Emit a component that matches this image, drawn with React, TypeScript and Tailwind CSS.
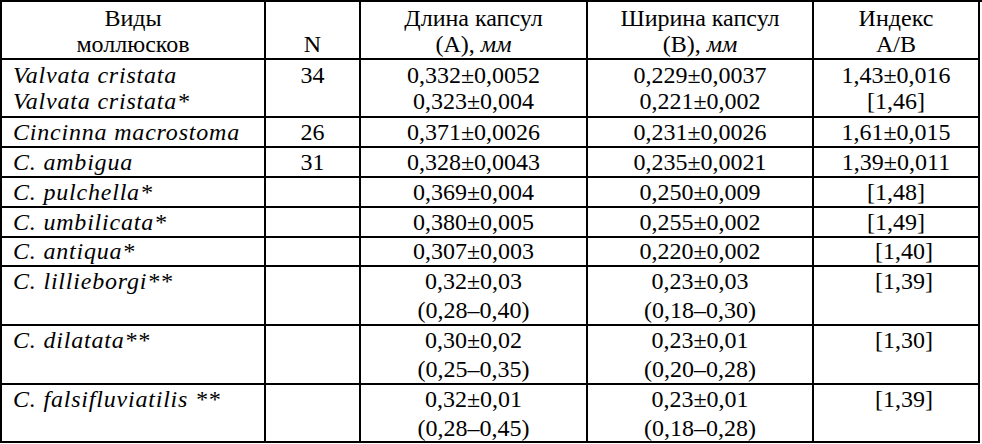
import React from "react";

type Row = {
  h: string;
  lead: string;
  pt: string;
  name: string[];
  n: string;
  a: string[];
  b: string[];
  i: string[];
  iShift?: string;
};

const rows: Row[] = [
  {
    h: "h-[58px]",
    lead: "leading-[26px]",
    pt: "pt-[2px]",
    name: ["Valvata cristata", "Valvata cristata*"],
    n: "34",
    a: ["0,332±0,0052", "0,323±0,004"],
    b: ["0,229±0,0037", "0,221±0,002"],
    i: ["1,43±0,016", "[1,46]"],
  },
  { h: "h-[30px]", lead: "leading-[28px]", pt: "pt-0", name: ["Cincinna macrostoma"], n: "26", a: ["0,371±0,0026"], b: ["0,231±0,0026"], i: ["1,61±0,015"] },
  { h: "h-[30px]", lead: "leading-[28px]", pt: "pt-0", name: ["C. ambigua"], n: "31", a: ["0,328±0,0043"], b: ["0,235±0,0021"], i: ["1,39±0,011"] },
  { h: "h-[30px]", lead: "leading-[28px]", pt: "pt-0", name: ["C. pulchella*"], n: "", a: ["0,369±0,004"], b: ["0,250±0,009"], i: ["[1,48]"] },
  { h: "h-[30px]", lead: "leading-[28px]", pt: "pt-0", name: ["C. umbilicata*"], n: "", a: ["0,380±0,005"], b: ["0,255±0,002"], i: ["[1,49]"] },
  { h: "h-[29px]", lead: "leading-[27px]", pt: "pt-0", name: ["C. antiqua*"], n: "", a: ["0,307±0,003"], b: ["0,220±0,002"], i: ["[1,40]"], iShift: "pl-[16px]" },
  { h: "h-[59px]", lead: "leading-[29px]", pt: "pt-0", name: ["C. lillieborgi**"], n: "", a: ["0,32±0,03", "(0,28–0,40)"], b: ["0,23±0,03", "(0,18–0,30)"], i: ["[1,39]"], iShift: "pl-[16px]" },
  { h: "h-[59px]", lead: "leading-[29px]", pt: "pt-0", name: ["C. dilatata**"], n: "", a: ["0,30±0,02", "(0,25–0,35)"], b: ["0,23±0,01", "(0,20–0,28)"], i: ["[1,30]"], iShift: "pl-[16px]" },
  { h: "h-[58px]", lead: "leading-[29px]", pt: "pt-0", name: ["C. falsifluviatilis **"], n: "", a: ["0,32±0,01", "(0,28–0,45)"], b: ["0,23±0,01", "(0,18–0,28)"], i: ["[1,39]"], iShift: "pl-[16px]" },
];

const cell = "border-r-2 border-b-2 border-black flex flex-col";

export default function App() {
  return (
    <div className="w-[982px] h-[444px] bg-white text-black text-[24px] overflow-hidden font-['Liberation_Serif','Times_New_Roman',serif]">
      <div className="border-l-2 border-t-2 border-black w-[982px]">
        {/* header */}
        <div className="flex h-[58px]">
          <div className={`${cell} w-[264px] items-center pt-[3px] leading-[26px]`}>
            <div>Виды</div>
            <div>моллюсков</div>
          </div>
          <div className={`${cell} w-[95px] items-center pt-[3px] leading-[26px]`}>
            <div>&nbsp;</div>
            <div>N</div>
          </div>
          <div className={`${cell} w-[227px] items-center pt-[3px] leading-[26px]`}>
            <div>Длина капсул</div>
            <div>
              (А), <span className="italic">мм</span>
            </div>
          </div>
          <div className={`${cell} w-[226px] items-center pt-[3px] leading-[26px]`}>
            <div>Ширина капсул</div>
            <div>
              (В), <span className="italic">мм</span>
            </div>
          </div>
          <div className={`${cell} w-[166px] items-center pt-[3px] leading-[26px]`}>
            <div>Индекс</div>
            <div>А/В</div>
          </div>
        </div>
        {rows.map((r, idx) => (
          <div key={idx} className={`flex ${r.h}`}>
            <div className={`${cell} w-[264px] items-start pl-[11px] italic tracking-[0.8px] ${r.pt} ${r.lead}`}>
              {r.name.map((t, k) => (
                <div key={k} className="whitespace-pre">{t}</div>
              ))}
            </div>
            <div className={`${cell} w-[95px] items-center ${r.pt} ${r.lead}`}>
              <div>{r.n || "\u00a0"}</div>
            </div>
            <div className={`${cell} w-[227px] items-center ${r.pt} ${r.lead}`}>
              {r.a.map((t, k) => (
                <div key={k}>{t}</div>
              ))}
            </div>
            <div className={`${cell} w-[226px] items-center ${r.pt} ${r.lead}`}>
              {r.b.map((t, k) => (
                <div key={k}>{t}</div>
              ))}
            </div>
            <div className={`${cell} w-[166px] items-center ${r.pt} ${r.lead} ${r.iShift ?? ""}`}>
              {r.i.map((t, k) => (
                <div key={k}>{t}</div>
              ))}
            </div>
          </div>
        ))}
      </div>
    </div>
  );
}
